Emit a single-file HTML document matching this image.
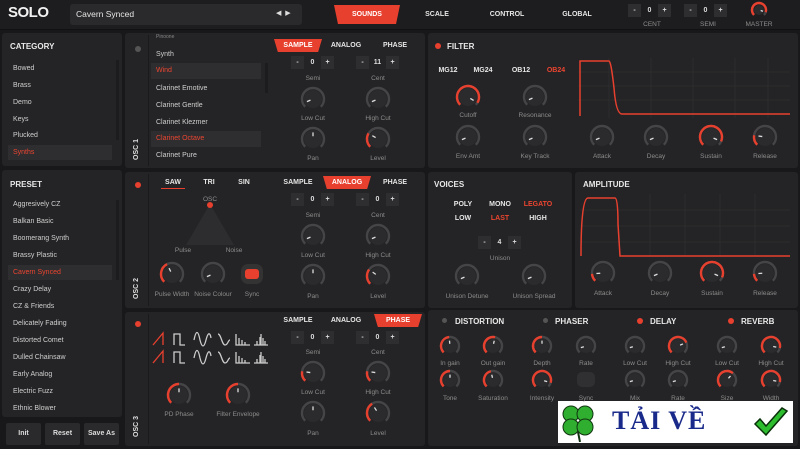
<!DOCTYPE html>
<html><head><meta charset="utf-8">
<style>
*{margin:0;padding:0;box-sizing:border-box}
body{width:800px;height:449px;background:#18181a;font-family:"Liberation Sans",sans-serif;position:relative;overflow:hidden;color:#ddd}
.a{position:absolute}
.p{position:absolute;background:#242426;border-radius:3px}
.t{position:absolute;white-space:nowrap;transform:translateX(-50%);font-size:6.5px;color:#8c8c8c}
.h{position:absolute;white-space:nowrap;font-size:8px;font-weight:bold;color:#e8e8e8}
.b{position:absolute;white-space:nowrap;transform:translateX(-50%);font-size:7px;font-weight:bold;color:#e6e6e6}
.r{color:#ec4530!important}
.li{position:absolute;font-size:7px;color:#cfcfcf;white-space:nowrap}
.st{position:absolute;height:13px;display:flex;gap:2px}
.st span{display:block;width:13px;height:13px;background:#2e2e30;font-size:7px;color:#ddd;text-align:center;line-height:13px;font-weight:bold}
.st span.v{background:none}
.tab{position:absolute;height:13px;background:#e8402e;color:#fff;font-size:7px;font-weight:bold;text-align:center;line-height:13px;clip-path:polygon(0 0,100% 0,92% 100%,8% 100%)}
.dot{position:absolute;width:6px;height:6px;border-radius:50%;background:#e8402e}
.gd{background:#555}
.vert{position:absolute;transform:rotate(-90deg);transform-origin:left top;font-size:7px;font-weight:bold;color:#ddd;white-space:nowrap}
.btn{position:absolute;height:22px;background:#2a2a2c;font-size:7px;font-weight:bold;color:#ddd;text-align:center;line-height:22px;border-radius:2px}
</style></head><body>
<div class="a" style="left:0;top:0;width:800px;height:30px;background:#1d1d1f;border-bottom:1px solid #111"></div>
<div class="a" style="left:8px;top:4px;font-size:15px;font-weight:bold;color:#f2f2f2;letter-spacing:-0.5px">SOLO</div>
<div class="a" style="left:70px;top:4px;width:232px;height:21px;background:#2a2a2c;border-radius:3px"></div>
<div class="a" style="left:76px;top:9px;font-size:8.5px;color:#e6e6e6">Cavern Synced</div>
<div class="a" style="left:276px;top:9px;font-size:7px;color:#ddd">◀&nbsp;&nbsp;▶</div>
<div class="tab" style="left:334px;top:5px;width:66px;height:19px;line-height:19px;clip-path:polygon(0 0,100% 0,94% 100%,6% 100%);font-size:7px">SOUNDS</div>
<div class="b" style="left:437px;top:11px">SCALE</div>
<div class="b" style="left:507px;top:11px">CONTROL</div>
<div class="b" style="left:577px;top:11px">GLOBAL</div>
<div class="st" style="left:628px;top:4px"><span>-</span><span class="v">0</span><span>+</span></div>
<div class="st" style="left:684px;top:4px"><span>-</span><span class="v">0</span><span>+</span></div>
<div class="t" style="left:652px;top:21px">CENT</div>
<div class="t" style="left:708px;top:21px">SEMI</div>
<div class="t" style="left:759px;top:21px">MASTER</div>

<div class="p" style="left:2px;top:33px;width:120px;height:133px"></div>
<div class="p" style="left:2px;top:170px;width:120px;height:247px"></div>
<div class="p" style="left:125px;top:33px;width:300px;height:135px"></div>
<div class="p" style="left:125px;top:172px;width:300px;height:136px"></div>
<div class="p" style="left:125px;top:312px;width:300px;height:134px"></div>
<div class="p" style="left:428px;top:33px;width:370px;height:135px"></div>
<div class="p" style="left:428px;top:172px;width:144px;height:136px"></div>
<div class="p" style="left:575px;top:172px;width:223px;height:136px"></div>
<div class="p" style="left:428px;top:310px;width:370px;height:136px"></div>
<div class="a" style="left:148px;top:35px;width:1px;height:131px;background:#1a1a1c"></div>
<div class="a" style="left:148px;top:174px;width:1px;height:132px;background:#1a1a1c"></div>
<div class="a" style="left:148px;top:314px;width:1px;height:130px;background:#1a1a1c"></div>

<div class="h" style="left:10px;top:42px">CATEGORY</div>
<div class="li" style="left:13px;top:65px">Bowed</div>
<div class="li" style="left:13px;top:82px">Brass</div>
<div class="li" style="left:13px;top:99px">Demo</div>
<div class="li" style="left:13px;top:116px">Keys</div>
<div class="li" style="left:13px;top:132px">Plucked</div>
<div class="a" style="left:8px;top:145px;width:104px;height:15px;background:#2e2e30"></div>
<div class="li r" style="left:13px;top:149px">Synths</div>
<div class="a" style="left:116px;top:60px;width:3px;height:80px;background:#1c1c1e"></div>

<div class="h" style="left:10px;top:180px">PRESET</div>
<div class="li" style="left:13px;top:201px">Aggresively CZ</div>
<div class="li" style="left:13px;top:218px">Balkan Basic</div>
<div class="li" style="left:13px;top:235px">Boomerang Synth</div>
<div class="li" style="left:13px;top:252px">Brassy Plastic</div>
<div class="a" style="left:8px;top:265px;width:104px;height:15px;background:#2e2e30"></div>
<div class="li r" style="left:13px;top:269px">Cavern Synced</div>
<div class="li" style="left:13px;top:286px">Crazy Delay</div>
<div class="li" style="left:13px;top:303px">CZ &amp; Friends</div>
<div class="li" style="left:13px;top:320px">Delicately Fading</div>
<div class="li" style="left:13px;top:337px">Distorted Comet</div>
<div class="li" style="left:13px;top:354px">Dulled Chainsaw</div>
<div class="li" style="left:13px;top:371px">Early Analog</div>
<div class="li" style="left:13px;top:388px">Electric Fuzz</div>
<div class="li" style="left:13px;top:405px">Ethnic Blower</div>
<div class="a" style="left:116px;top:200px;width:3px;height:80px;background:#1c1c1e"></div>
<div class="btn" style="left:6px;top:423px;width:35px">Init</div>
<div class="btn" style="left:45px;top:423px;width:35px">Reset</div>
<div class="btn" style="left:84px;top:423px;width:35px">Save As</div>

<div class="dot gd" style="left:135px;top:46px"></div>
<div class="vert" style="left:133px;top:160px">OSC 1</div>
<div class="li" style="left:156px;top:34px;color:#888;font-size:5px">Pinoone</div>
<div class="li" style="left:156px;top:51px">Synth</div>
<div class="a" style="left:151px;top:63px;width:110px;height:16px;background:#2e2e30"></div>
<div class="li r" style="left:156px;top:67px">Wind</div>
<div class="li" style="left:156px;top:85px">Clarinet Emotive</div>
<div class="li" style="left:156px;top:102px">Clarinet Gentle</div>
<div class="li" style="left:156px;top:119px">Clarinet Klezmer</div>
<div class="a" style="left:151px;top:131px;width:110px;height:16px;background:#2e2e30"></div>
<div class="li r" style="left:156px;top:135px">Clarinet Octave</div>
<div class="li" style="left:156px;top:152px">Clarinet Pure</div>
<div class="a" style="left:265px;top:63px;width:3px;height:30px;background:#1c1c1e"></div>
<div class="tab" style="left:274px;top:39px;width:48px">SAMPLE</div>
<div class="b" style="left:346px;top:42px">ANALOG</div>
<div class="b" style="left:395px;top:42px">PHASE</div>
<div class="st" style="left:291px;top:56px"><span>-</span><span class="v">0</span><span>+</span></div>
<div class="st" style="left:356px;top:56px"><span>-</span><span class="v">11</span><span>+</span></div>
<div class="t" style="left:313px;top:75px">Semi</div>
<div class="t" style="left:378px;top:75px">Cent</div>

<div class="dot" style="left:435px;top:43px"></div>
<div class="h" style="left:447px;top:42px">FILTER</div>
<div class="b" style="left:448px;top:67px">MG12</div>
<div class="b" style="left:483px;top:67px">MG24</div>
<div class="b" style="left:521px;top:67px">OB12</div>
<div class="b r" style="left:556px;top:67px">OB24</div>

<div class="dot" style="left:135px;top:182px"></div>
<div class="vert" style="left:133px;top:299px">OSC 2</div>
<div class="b" style="left:173px;top:179px">SAW</div>
<div class="a" style="left:161px;top:188px;width:24px;height:1px;background:#e8402e"></div>
<div class="b" style="left:209px;top:179px">TRI</div>
<div class="b" style="left:244px;top:179px">SIN</div>
<div class="b" style="left:298px;top:179px">SAMPLE</div>
<div class="tab" style="left:323px;top:176px;width:48px">ANALOG</div>
<div class="b" style="left:395px;top:179px">PHASE</div>
<svg class="a" style="left:180px;top:200px" width="60" height="46"><polygon points="30,4 6,45 54,45" fill="#2d2d2f"/><circle cx="30" cy="5" r="3" fill="#e8402e"/></svg>
<div class="t" style="left:210px;top:196px">OSC</div>
<div class="t" style="left:183px;top:247px">Pulse</div>
<div class="t" style="left:234px;top:247px">Noise</div>
<div class="a" style="left:241px;top:264px;width:22px;height:20px;background:#333;border-radius:7px"></div>
<div class="a" style="left:245px;top:269px;width:14px;height:10px;background:#e8402e;border-radius:3px"></div>
<div class="t" style="left:252px;top:291px">Sync</div>
<div class="st" style="left:291px;top:193px"><span>-</span><span class="v">0</span><span>+</span></div>
<div class="st" style="left:356px;top:193px"><span>-</span><span class="v">0</span><span>+</span></div>
<div class="t" style="left:313px;top:212px">Semi</div>
<div class="t" style="left:378px;top:212px">Cent</div>

<div class="h" style="left:434px;top:180px">VOICES</div>
<div class="b" style="left:463px;top:201px">POLY</div>
<div class="b" style="left:500px;top:201px">MONO</div>
<div class="b r" style="left:538px;top:201px">LEGATO</div>
<div class="b" style="left:463px;top:215px">LOW</div>
<div class="b r" style="left:500px;top:215px">LAST</div>
<div class="b" style="left:538px;top:215px">HIGH</div>
<div class="st" style="left:478px;top:236px"><span>-</span><span class="v">4</span><span>+</span></div>
<div class="t" style="left:500px;top:255px">Unison</div>
<div class="h" style="left:583px;top:180px">AMPLITUDE</div>

<div class="dot" style="left:135px;top:321px"></div>
<div class="vert" style="left:133px;top:437px">OSC 3</div>
<div class="b" style="left:298px;top:317px">SAMPLE</div>
<div class="b" style="left:346px;top:317px">ANALOG</div>
<div class="tab" style="left:374px;top:314px;width:48px">PHASE</div>
<svg class="a" style="left:150px;top:330px" width="120" height="40" fill="none" stroke-width="1.3">
<g id="w"><path d="M3 15 L13 3 L13 15" stroke="#e8402e"/><path d="M24 15 V4 H30 V15 H35" stroke="#ccc"/><path d="M44 10 C46 0 48 0 50 10 C52 18 54 18 56 10 C58 2 60 2 61 8" stroke="#ccc"/><path d="M68 4 C71 4 72 15 75 15 C78 15 78 10 80 10" stroke="#ccc"/><path d="M86 4 V15 H100 M89 15 V8 M92 15 V10 M95 15 V12" stroke="#ccc"/><path d="M104 15 H118 M107 15 V11 M110 15 V7 M111 15 V4 M113 15 V8 M115 15 V11" stroke="#ccc"/></g>
<use href="#w" y="18"/></svg>
<div class="st" style="left:291px;top:331px"><span>-</span><span class="v">0</span><span>+</span></div>
<div class="st" style="left:356px;top:331px"><span>-</span><span class="v">0</span><span>+</span></div>
<div class="t" style="left:313px;top:349px">Semi</div>
<div class="t" style="left:378px;top:349px">Cent</div>

<div class="dot gd" style="left:442px;top:318px;width:5px;height:5px"></div><div class="h" style="left:455px;top:317px">DISTORTION</div>
<div class="dot gd" style="left:543px;top:318px;width:5px;height:5px"></div><div class="h" style="left:555px;top:317px">PHASER</div>
<div class="dot" style="left:637px;top:318px"></div><div class="h" style="left:650px;top:317px">DELAY</div>
<div class="dot" style="left:728px;top:318px"></div><div class="h" style="left:741px;top:317px">REVERB</div>
<div class="a" style="left:577px;top:372px;width:18px;height:15px;background:#303032;border-radius:5px"></div>

<svg class="a" style="left:578px;top:58px" width="214" height="62">
<g stroke="#333" stroke-width="0.6"><path d="M0 14H212M0 28H212M0 42H212M31 0V60M73 0V60M115 0V60M157 0V60M190 0V60"/></g>
<path d="M2 58 V3 H31 Q33 3 36 30 Q38 56 44 56 H212" fill="none" stroke="#e8402e" stroke-width="1.5"/></svg>
<svg class="a" style="left:580px;top:194px" width="212" height="64">
<g stroke="#333" stroke-width="0.6"><path d="M0 16H210M0 32H210M0 48H210M70 0V62M105 0V62M140 0V62M175 0V62"/></g>
<path d="M1 62 Q1 4 8 4 H35 Q38 4 38 30 L40 62 H210" fill="none" stroke="#e8402e" stroke-width="1.5"/></svg>

<div class="a" style="left:558px;top:401px;width:235px;height:42px;background:#fff"></div>
<svg class="a" style="left:560px;top:402px" width="36" height="40"><g fill="#2fae2f" stroke="#113311" stroke-width="1"><circle cx="11" cy="12" r="8"/><circle cx="25" cy="12" r="8"/><circle cx="11" cy="25" r="8"/><circle cx="25" cy="25" r="8"/></g><path d="M18 30 L20 40" stroke="#113311" stroke-width="2"/></svg>
<div class="a" style="left:612px;top:406px;font-family:'Liberation Serif',serif;font-size:26px;font-weight:bold;color:#1a2a8a;letter-spacing:1px">TẢI VỀ</div>
<svg class="a" style="left:752px;top:406px" width="38" height="34"><path d="M3 18 L14 29 L35 5 L30 2 L14 20 L8 13 Z" fill="#2ebd2e" stroke="#0a300a" stroke-width="1.5"/></svg>

<div id="k"></div>
<script>
var K=[
[313,99,"Low Cut",.08,0,11,115],[378,99,"High Cut",.08,0,11,115],[313,139,"Pan",.5,0,11,155],[378,139,"Level",.28,1,11,155],
[468,97,"Cutoff",.95,1,11,112],[535,97,"Resonance",.08,0,11,112],[468,137,"Env Amt",.08,0,11,153],[535,137,"Key Track",.08,0,11,153],
[602,137,"Attack",.08,0,11,153],[656,137,"Decay",.08,0,11,153],[711,137,"Sustain",.92,1,11,153],[765,137,"Release",.2,1,11,153],
[172,274,"Pulse Width",.4,1,11,291],[213,274,"Noise Colour",.08,0,11,291],
[313,236,"Low Cut",.08,0,11,252],[378,236,"High Cut",.08,0,11,252],[313,276,"Pan",.5,0,11,293],[378,276,"Level",.3,1,11,293],
[467,276,"Unison Detune",.08,0,11,293],[534,276,"Unison Spread",.08,0,11,293],
[603,273,"Attack",.15,1,11,290],[660,273,"Decay",.08,0,11,290],[712,273,"Sustain",.92,1,11,290],[765,273,"Release",.15,1,11,290],
[179,395,"PD Phase",.5,1,11,411],[238,395,"Filter Envelope",.5,1,11,411],
[313,373,"Low Cut",.2,1,11,389],[378,373,"High Cut",.2,1,11,389],[313,413,"Pan",.5,0,11,430],[378,413,"Level",.38,1,11,430],
[450,346,"In gain",.48,1,9,360],[493,346,"Out gain",.55,1,9,360],[542,346,"Depth",.5,1,9,360],[586,346,"Rate",.1,0,9,360],
[635,346,"Low Cut",.1,0,9,360],[678,346,"High Cut",.75,1,9,360],[727,346,"Low Cut",.1,0,9,360],[771,346,"High Cut",.88,1,9,360],
[450,380,"Tone",.5,1,9,395],[493,380,"Saturation",.45,1,9,395],[542,380,"Intensity",.9,1,9,395],
[635,380,"Mix",.1,0,9,395],[678,380,"Rate",.1,0,9,395],[727,380,"Size",.65,1,9,395],[771,380,"Width",.88,1,9,395],
[759,10,"",.9,1,7,0]];
var h="";
function pt(cx,cy,r,a){return [cx+r*Math.cos(a),cy-r*Math.sin(a)];}
K.forEach(function(k){
 var x=k[0],y=k[1],f=k[3],R=k[5],s=R*2+6,c=s/2,rr=R;
 var a0=225*Math.PI/180,a1=(225-270*f)*Math.PI/180,ae=-45*Math.PI/180;
 var p0=pt(c,c,rr,a0),pe=pt(c,c,rr,ae),p1=pt(c,c,rr,a1);
 var svg='<svg class="a" style="left:'+(x-c)+'px;top:'+(y-c)+'px" width="'+s+'" height="'+s+'">';
 svg+='<path d="M'+p0+' A'+rr+' '+rr+' 0 1 1 '+pe+'" fill="none" stroke="#454547" stroke-width="2.4"/>';
 if(k[4]) svg+='<path d="M'+p0+' A'+rr+' '+rr+' 0 '+(270*f>180?1:0)+' 1 '+p1+'" fill="none" stroke="#e8402e" stroke-width="2.4"/>';
 svg+='<circle cx="'+c+'" cy="'+c+'" r="'+(rr-2)+'" fill="#2b2b2d"/>';
 var i0=pt(c,c,rr*0.25,a1),i1=pt(c,c,rr*0.6,a1);
 svg+='<line x1="'+i0[0]+'" y1="'+i0[1]+'" x2="'+i1[0]+'" y2="'+i1[1]+'" stroke="#ddd" stroke-width="1.3"/></svg>';
 h+=svg;
 if(k[2]) h+='<div class="t" style="left:'+x+'px;top:'+k[6]+'px">'+k[2]+'</div>';
});
h+='<div class="t" style="left:586px;top:395px">Sync</div>';
document.getElementById("k").innerHTML=h;
</script>
</body></html>
